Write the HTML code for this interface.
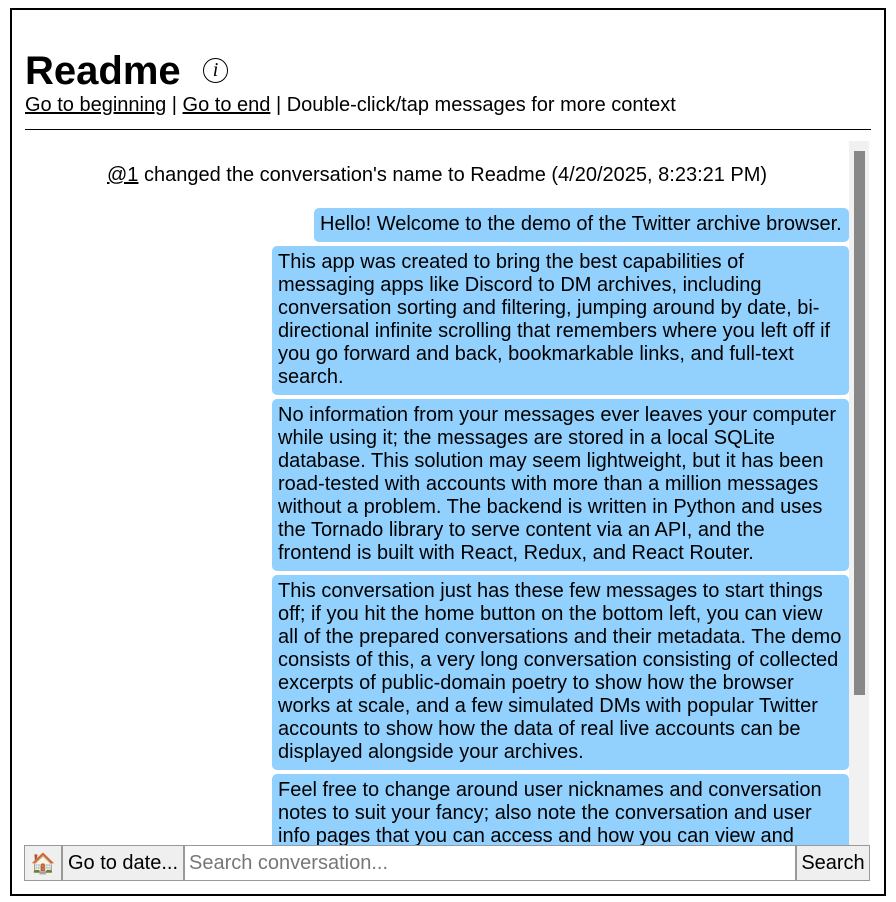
<!DOCTYPE html>
<html><head><meta charset="utf-8"><style>
body{margin:0;background:#fff;font-family:"Liberation Sans",Arial,sans-serif;color:#000}
.frame{position:absolute;left:10px;top:8px;width:872px;height:884px;border:2px solid #000;overflow:hidden}
h1{position:absolute;left:13px;top:38px;margin:0;font-size:40px;font-weight:bold;line-height:46px}
.info{position:absolute;left:191px;top:48px;width:23px;height:23px;border:1.5px solid #000;border-radius:50%;font-family:"Liberation Serif",serif;font-style:italic;font-size:20px;text-align:center;line-height:23px}
.nav{position:absolute;left:13px;top:84px;font-size:20px;line-height:23px}
.nav a{color:#000;text-decoration:underline}
.hr{position:absolute;left:13px;top:119px;width:846px;height:1px;background:#000}
.sys{position:absolute;left:95px;top:154px;font-size:20px;line-height:23px}
.sys a{color:#000;text-decoration:underline}
.track{position:absolute;left:837px;top:131px;width:20px;height:704px;background:#f1f1f1}
.thumb{position:absolute;left:842px;top:141px;width:11px;height:544px;background:#888}
.msgs{position:absolute;left:0;top:0;width:872px;height:835px;overflow:hidden}
.b{position:absolute;right:35px;background:#92d0fd;border-radius:5px;padding:5px 6px 6px;font-size:20px;line-height:23px;box-sizing:border-box}
.bar{position:absolute;left:12px;top:835px;height:36px;display:flex;z-index:2}
.btn{background:#efefef;border:1px solid #999;font-size:20px;display:flex;align-items:center;justify-content:center;box-sizing:border-box;height:36px}
.inp{border:1px solid #999;font-size:20px;color:#777;display:flex;align-items:center;padding-left:4px;box-sizing:border-box;height:36px;width:612px;background:#fff}
</style></head><body>
<div class="frame">
<h1>Readme</h1><div class="info">i</div>
<div class="nav"><a>Go to beginning</a> | <a>Go to end</a> | Double-click/tap messages for more context</div>
<div class="hr"></div>
<div class="sys"><a>@1</a> changed the conversation's name to Readme (4/20/2025, 8:23:21 PM)</div>
<div class="track"></div><div class="thumb"></div>
<div class="msgs">
<div class="b" style="top:198px;left:302px">Hello! Welcome to the demo of the Twitter archive browser.</div>
<div class="b" style="top:236px;left:260px">This app was created to bring the best capabilities of messaging apps like Discord to DM archives, including conversation sorting and filtering, jumping around by date, bi-directional infinite scrolling that remembers where you left off if you go forward and back, bookmarkable links, and full-text search.</div>
<div class="b" style="top:389px;left:260px">No information from your messages ever leaves your computer while using it; the messages are stored in a local SQLite database. This solution may seem lightweight, but it has been road-tested with accounts with more than a million messages without a problem. The backend is written in Python and uses the Tornado library to serve content via an API, and the frontend is built with React, Redux, and React Router.</div>
<div class="b" style="top:565px;left:260px">This conversation just has these few messages to start things off; if you hit the home button on the bottom left, you can view all of the prepared conversations and their metadata. The demo consists of this, a very long conversation consisting of collected excerpts of public-domain poetry to show how the browser works at scale, and a few simulated DMs with popular Twitter accounts to show how the data of real live accounts can be displayed alongside your archives.</div>
<div class="b" style="top:764px;left:260px">Feel free to change around user nicknames and conversation notes to suit your fancy; also note the conversation and user info pages that you can access and how you can view and<br>edit them.</div>
</div>
<div class="bar">
<div class="btn" style="width:38px">🏠</div>
<div class="btn" style="width:122px">Go to date...</div>
<div class="inp">Search conversation...</div>
<div class="btn" style="width:74px">Search</div>
</div>
</div>
</body></html>
